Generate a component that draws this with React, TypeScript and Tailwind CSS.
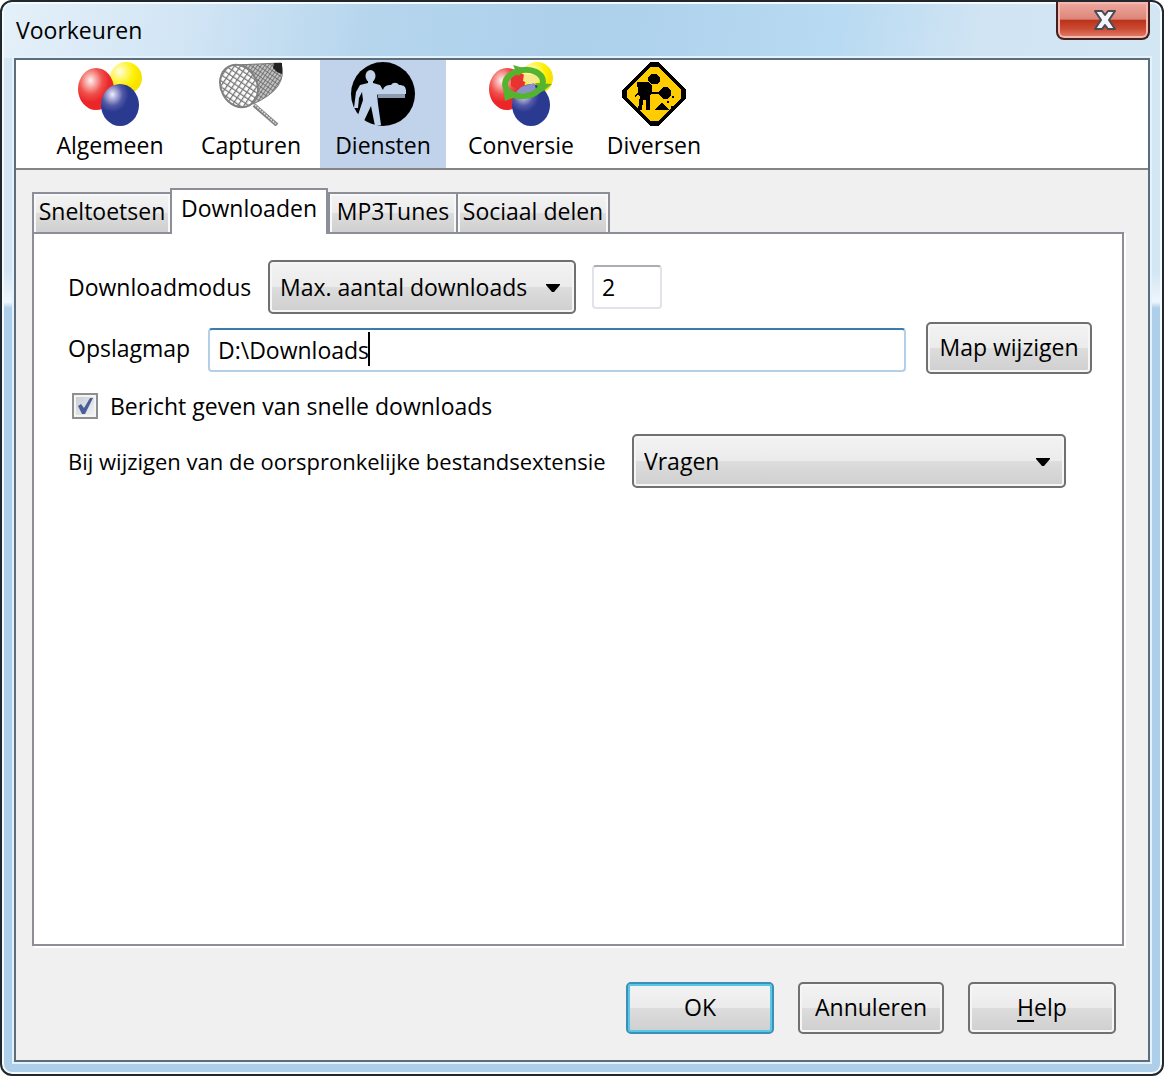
import React, { useState } from 'react';

const BallsIcon = ({ id, arrows }: { id: string; arrows?: boolean }) => (
  <svg viewBox="0 0 64 64" className="h-16 w-16" aria-hidden="true">
    <defs>
      <radialGradient id={`${id}-red`} cx="0.35" cy="0.3" r="0.65">
        <stop offset="0" stopColor="#fff3f0" />
        <stop offset="0.5" stopColor="#f0504c" />
        <stop offset="0.8" stopColor="#ec2529" />
      </radialGradient>
      <radialGradient id={`${id}-yellow`} cx="0.3" cy="0.3" r="0.65">
        <stop offset="0" stopColor="#fffde0" />
        <stop offset="0.7" stopColor="#fff000" />
        <stop offset="1" stopColor="#f8e200" />
      </radialGradient>
      <radialGradient id={`${id}-blue`} cx="0.3" cy="0.25" r="0.6">
        <stop offset="0" stopColor="#f0efff" />
        <stop offset="0.45" stopColor="#5359a6" />
        <stop offset="0.7" stopColor="#2a3a90" />
      </radialGradient>
    </defs>
    <ellipse cx="48" cy="16" rx="16" ry="16" fill={`url(#${id}-yellow)`} />
    <ellipse cx="18" cy="27" rx="18" ry="21" fill={`url(#${id}-red)`} />
    <ellipse cx="42" cy="43" rx="19" ry="21" fill={`url(#${id}-blue)`} />
    {arrows && (
      <g>
        <path d="M22 16l10-5 7 4-4 8-7 4-6-3z" fill="#e8342f" />
        <path d="M35 12l12 1 4 5-8 5-9-4z" fill="#f7e98a" />
        <path d="M27 31l6-6 12-4 2 6-7 5z" fill="#8c90cc" />
        <ellipse cx="35" cy="21" rx="19" ry="13" fill="none" stroke="#54b430" strokeWidth="6" transform="rotate(-8 35 21)" />
        <path d="M24 3l14 4-9 7zM63 22l-10 8-7-9zM14 26l15 8-13 5z" fill="#54b430" />
      </g>
    )}
  </svg>
);

const NetIcon = () => (
  <svg viewBox="0 0 64 64" className="h-16 w-16" aria-hidden="true">
    <defs>
      <pattern id="mesh" width="5" height="5" patternUnits="userSpaceOnUse" patternTransform="rotate(-28)">
        <path d="M0 0h5M0 0v5" stroke="#777" strokeWidth="2.500" fill="none" />
      </pattern>
      <pattern id="mesh-fine" width="3" height="4" patternUnits="userSpaceOnUse" patternTransform="rotate(35)">
        <path d="M0 0h3M0 0v4" stroke="#666" strokeWidth="1.600" fill="none" />
      </pattern>
    </defs>
    <path d="M16 3L62 1q4 12-3 23-7 10-25 18z" fill="#c4c4c4" />
    <path d="M16 3L62 1q4 12-3 23-7 10-25 18z" fill="url(#mesh-fine)" stroke="#777" />
    <ellipse cx="20" cy="24" rx="18" ry="22" transform="rotate(-28 20 24)" fill="#fff" />
    <ellipse cx="20" cy="24" rx="18" ry="22" transform="rotate(-28 20 24)" fill="url(#mesh)" stroke="#808080" strokeWidth="2" />
    <path d="M55 1h8v11l-5-2-4-4z" fill="#222" />
    <path d="M35 43l23 20" stroke="#808080" strokeWidth="4" />
    <path d="M36 43l21 19" stroke="#ddd" strokeWidth="1.500" strokeDasharray="2 1" />
  </svg>
);

const WaiterIcon = () => (
  <svg viewBox="0 0 64 64" className="h-16 w-16" aria-hidden="true">
    <circle cx="32" cy="32" r="32" fill="#000" />
    <g fill="#c1d2eb">
      <ellipse cx="19.500" cy="14" rx="5" ry="6" />
      <path d="M17 18h5v3l7 2 3 5v7h-4l-2-3 1 10 3 21-6 1-4-20-8 17-6-5 6-18-1-8-3 6-1 10H3l2-16 4-7 8-2z" />
      <path d="M32 28c1-4 4-5 8-5 2-3 6-3 8 0 5 0 7 2 7 6z" />
      <path d="M27 32h27v4H27z" fill="#8d9bb0" />
      <path d="M29 28h26v4H29z" />
    </g>
  </svg>
);

const WorkSignIcon = () => (
  <svg viewBox="0 0 64 64" className="h-16 w-16" shapeRendering="crispEdges" aria-hidden="true">
    <path d="M28 0h8l28 28v8L36 64h-8L0 36v-8z" fill="#000" />
    <path d="M30 3h4l27 27v4L34 61h-4L3 34v-4z" fill="#fc0" />
    <path d="M28 0h8l4 5H24zM28 64h8l4-5H24zM0 28v8l5 3V25zM64 28v8l-5 3V25z" fill="#000" />
    <g fill="#000">
      <path d="M30 12h4l4 3v4l-3 3h-6l-3-3v-4zM41 25h4l4 4v4l-4 4h-4l-4-4v-4z" />
      <path d="M15 20h11l4 4v6h10v2H29l-1 3v13h-4V38h-3l-1 10h-4l2-14-3-1-2 2v-2l3-3v-5h-1zM32 48l8-8 7 8zM50 34h2v2h-2zM45 39h2v2h-2zM49 44h2v2h-2z" />
    </g>
  </svg>
);

const categories = [
  { label: 'Algemeen', width: 'w-36', icon: <BallsIcon id="general" /> },
  { label: 'Capturen', width: 'w-[138px]', icon: <NetIcon /> },
  { label: 'Diensten', width: 'w-[126px]', icon: <WaiterIcon /> },
  { label: 'Conversie', width: 'w-[150px]', icon: <BallsIcon id="convert" arrows /> },
  { label: 'Diversen', width: 'w-[116px]', icon: <WorkSignIcon /> },
];

const tabs = [
  { label: 'Sneltoetsen', width: 'w-[138px]' },
  { label: 'Downloaden', width: 'w-[158px]' },
  { label: 'MP3Tunes', width: 'w-32' },
  { label: 'Sociaal delen', width: 'w-[154px]' },
];

const face = 'bg-[linear-gradient(#f3f3f3,#ebebeb_50%,#dddddd_50%,#cfcfcf)]';

const raised = `rounded-[5px] border-2 border-[#707070] ${face} shadow-[inset_0_0_0_2px_#f6f6f6]`;

const Select = ({ id, className, options }: { id: string; className: string; options: string[] }) => (
  <div className={`relative ${className}`}>
    <select id={id} className={`h-[54px] w-full appearance-none pr-10 pl-2.5 outline-none ${raised}`}>
      {options.map((option) => (
        <option key={option}>{option}</option>
      ))}
    </select>
    <svg
      viewBox="0 0 14 8"
      className="pointer-events-none absolute top-6 right-4 h-2 w-3.5"
      aria-hidden="true"
    >
      <path d="M0 0h14v1L8 8H6L0 1z" />
    </svg>
  </div>
);

const App: React.FC = () => {
  const [category, setCategory] = useState('Diensten');
  const [tab, setTab] = useState('Downloaden');
  const [folder, setFolder] = useState('D:\\Downloads');

  return (
    <div className="bg-white font-['Open_Sans','Noto_Sans',sans-serif] text-[23px] leading-8 text-black">
      <div className="flex min-h-screen flex-col rounded-xl border-2 border-[#20272d] bg-[linear-gradient(#d3e6f4_0,#d3e6f4_270px,#eef6fb_300px,#aecfea_306px,#aecfea)] px-3 pb-3 shadow-[inset_0_0_0_2px_#f4faff]">
        {/* Title bar */}
        <header className="-mx-2.5 mt-0.5 flex h-[54px] items-start justify-between rounded-t-lg bg-[linear-gradient(100deg,#e4f0f9_0%,#d3e6f5_15%,#b5d5ed_32%,#add0eb_50%,#b8daf2_72%,#d0e4f3_84%,#d3e6f4_100%)] pl-3">
          <h1 className="pt-2.5">Voorkeuren</h1>
          <button
            type="button"
            aria-label="Sluiten"
            className="-mt-0.5 mr-2.5 flex h-[38px] w-[94px] items-center justify-center rounded-b-lg border-2 border-t-0 border-[#431f1e] bg-[linear-gradient(#efaaa0,#dc8579_48%,#b93118_50%,#cc4c34_75%,#e38272)] pl-1 shadow-[inset_0_0_0_2px_#f3b9af]"
          >
            <svg viewBox="0 0 22 20" className="h-5 w-[22px]" aria-hidden="true">
              <path
                d="M1 1h7l3 4 3-4h7l-6 9 6 9h-7l-3-4-3 4H1l6-9z"
                fill="#f4f6f8"
                stroke="#4c4b55"
                strokeWidth="2"
                strokeLinejoin="round"
              />
            </svg>
          </button>
        </header>

        <main className="flex grow flex-col border-2 border-[#5d6d7b] bg-[#f0f0f0] shadow-[0_0_0_2px_#e4f2fc]">
          <nav className="flex border-b-2 border-[#848484] bg-white pl-[22px]">
            {categories.map(({ label, width, icon }) => (
              <button
                key={label}
                type="button"
                aria-pressed={category === label}
                onClick={() => setCategory(label)}
                className={`flex flex-col items-center pt-0.5 pb-1 ${width} ${category === label ? 'bg-[#c1d2eb]' : ''}`}
              >
                {icon}
                <span className="leading-[38px]">{label}</span>
              </button>
            ))}
          </nav>

          <div className="flex grow flex-col pt-[18px] pr-6 pl-4">
            <div role="tablist" className="relative z-10 -mb-0.5 flex items-end">
              {tabs.map(({ label, width }) => {
                const active = tab === label;
                return (
                  <button
                    key={label}
                    type="button"
                    role="tab"
                    aria-selected={active}
                    onClick={() => setTab(label)}
                    className={`border-2 border-[#8c8e98] text-center whitespace-nowrap ${width} ${
                      active
                        ? 'h-[46px] border-b-0 bg-white pb-2'
                        : `h-[42px] border-r-0 pb-1 ${face} shadow-[inset_2px_2px_0_0_#f8f8f8,inset_-2px_0_0_0_#f8f8f8] last:border-r-2`
                    }`}
                  >
                    {label}
                  </button>
                );
              })}
            </div>

            <section
              role="tabpanel"
              className="grow border-2 border-[#8c8e98] bg-white pt-[26px] pr-[30px] pl-[34px] shadow-[2px_2px_0_0_#fff]"
            >
              <div className="flex items-center">
                <label htmlFor="mode" className="w-[200px] shrink-0">
                  Downloadmodus
                </label>
                <Select id="mode" className="w-[308px]" options={['Max. aantal downloads', 'Onbeperkt']} />
                <input
                  aria-label="Aantal downloads"
                  defaultValue="2"
                  className="ml-4 h-11 w-[70px] rounded-[4px] border-2 border-[#e2e3ea] border-t-[#abadb3] bg-white px-2 outline-none"
                />
              </div>

              <div className="mt-2 flex items-center">
                <label htmlFor="folder" className="w-[140px] shrink-0">
                  Opslagmap
                </label>
                <div className="relative grow pt-1">
                  <input
                    id="folder"
                    value={folder}
                    onChange={(e) => setFolder(e.target.value)}
                    className="block h-11 w-full rounded-[4px] border-2 border-[#b5cfe7] border-t-[#3d7bad] bg-white px-2 outline-none"
                  />
                  <span className="absolute top-2 left-40 h-[34px] w-0.5 bg-black" />
                </div>
                <button type="button" className={`ml-5 h-[52px] w-[166px] pb-0.5 whitespace-nowrap ${raised}`}>
                  Map wijzigen
                </button>
              </div>

              <label className="mt-4 flex items-center gap-3 pl-1">
                <span className="relative flex">
                  <input
                    type="checkbox"
                    defaultChecked
                    className="peer h-[26px] w-[26px] appearance-none border-2 border-[#8e8f8f] bg-[linear-gradient(135deg,#c5cad2,#f5f5f5)] shadow-[inset_0_0_0_2px_#f4f4f4]"
                  />
                  <svg
                    viewBox="0 0 26 26"
                    className="pointer-events-none absolute inset-0 hidden peer-checked:block"
                    aria-hidden="true"
                  >
                    <path d="M6 13l3-2 3 4 6-10h3l-8 16h-3z" fill="#4a5f97" />
                  </svg>
                </span>
                Bericht geven van snelle downloads
              </label>

              <div className="mt-3 flex items-center">
                <label htmlFor="extension" className="w-[564px] shrink-0 text-[22px] whitespace-nowrap">
                  Bij wijzigen van de oorspronkelijke bestandsextensie
                </label>
                <Select id="extension" className="w-[434px]" options={['Vragen', 'Wijzigen', 'Behouden']} />
              </div>
            </section>
          </div>

          <footer className="flex justify-end gap-6 pt-9 pr-8 pb-[26px]">
            <button
              type="button"
              className={`h-[52px] w-[148px] rounded-[5px] border-2 border-[#3c8fb8] pb-0.5 ${face} shadow-[inset_0_0_0_2px_#58c6e6]`}
            >
              OK
            </button>
            <button type="button" className={`h-[52px] w-[146px] pb-0.5 ${raised}`}>
              Annuleren
            </button>
            <button type="button" className={`h-[52px] w-[148px] pb-0.5 ${raised}`}>
              <span className="underline underline-offset-4">H</span>elp
            </button>
          </footer>
        </main>
      </div>
    </div>
  );
};

export default App;
